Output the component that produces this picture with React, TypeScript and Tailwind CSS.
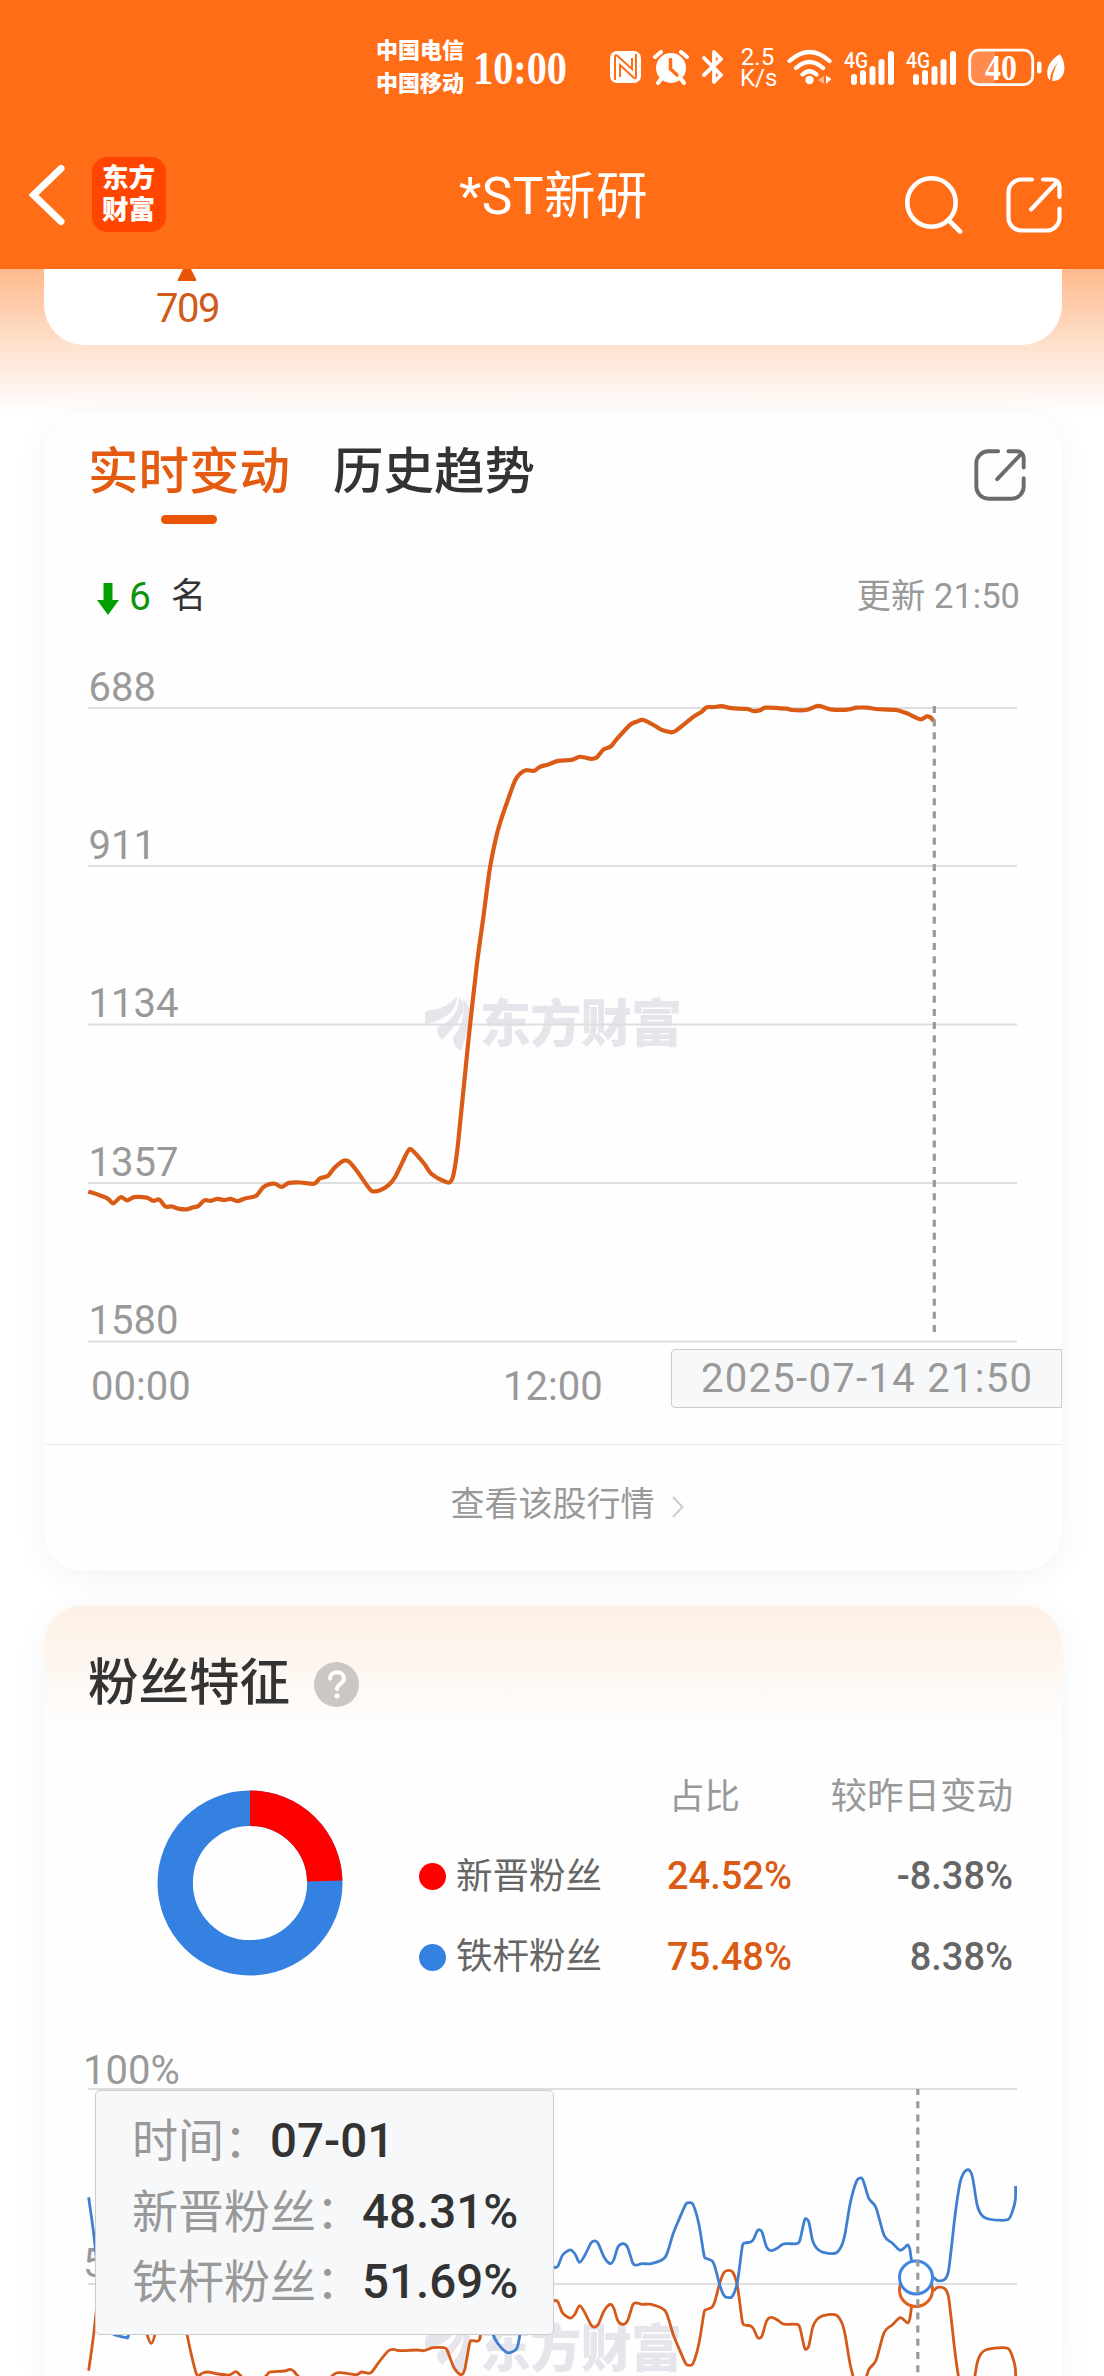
type Point = [number, number];

const RANK_TICKS = [
  { label: "688", y: 708 },
  { label: "911", y: 866 },
  { label: "1134", y: 1024.5 },
  { label: "1357", y: 1183 },
  { label: "1580", y: 1341.5 },
];

const RANK_POINTS: Point[] = [
  [88.3, 1191.4], [106.7, 1198], [113.3, 1203.3], [120.7, 1197.2], [127.3, 1200.4], [134, 1197.2],
  [146.7, 1197.6], [153.3, 1200.8], [159.3, 1199.6], [165.3, 1206.5], [171.7, 1206.5], [178.3, 1208.6],
  [186.7, 1209.4], [192.3, 1207.4], [198.3, 1206.1], [204.3, 1200.4], [210.7, 1200.8], [217.3, 1198.8],
  [224, 1200], [230.7, 1198.8], [237.3, 1201.2], [245, 1198.4], [255.7, 1196], [262.7, 1187.8],
  [268.3, 1184.5], [275, 1183.7], [281.7, 1187], [289, 1182.9], [300.7, 1182.5], [314, 1183.7],
  [320, 1178.4], [327.7, 1176], [334, 1168.2], [341.7, 1161.7], [345.7, 1160.4], [350, 1162.5],
  [357.3, 1171.5], [370, 1189.4], [374, 1191.4], [380, 1190.2], [388.3, 1185.3], [395, 1177.2],
  [405, 1156.8], [408.3, 1150.6], [411.7, 1149.8], [423.3, 1162.5], [430, 1172.3], [435, 1176.4],
  [443.3, 1180.8], [449.3, 1182.5], [453.3, 1175.5], [458, 1144], [468.3, 1041.6], [476.7, 965.9],
  [483.3, 917.6], [490, 867.7], [496.7, 835], [501.7, 817.8], [508.3, 798.8], [515, 780.6],
  [520, 773.7], [526, 770.2], [534, 770.9], [540, 766.8], [548.3, 764.4], [558.3, 760.9],
  [571.7, 759.9], [579.3, 756.8], [585, 757.5], [591, 758.9], [596.7, 757.5], [603.3, 749.6],
  [610.7, 746.5], [616.7, 739.2], [630, 724.8], [636.7, 721.7], [643.3, 720], [655, 725.8],
  [661.7, 729.9], [668.3, 731.7], [675, 731.3], [693.3, 716.9], [701.7, 711.7], [706.7, 707.2],
  [713.3, 707.2], [721.7, 706.2], [731.7, 708.2], [746.7, 708.9], [753.3, 711], [760, 710.3],
  [766, 707.6], [786.4, 708.7], [791.8, 710], [806.2, 710], [817, 706], [822.4, 706.7],
  [830.6, 709.3], [847.5, 709.7], [856.5, 707.7], [867.3, 707.7], [876.3, 709], [896.1, 710],
  [906.9, 713.3], [920.5, 719.3], [926.7, 716.3], [930.3, 717.3], [933.5, 720.7],
];

const LOYAL_POINTS: Point[] = [
  [88.6, 2197.3], [93.6, 2233], [100, 2290], [106, 2325], [113, 2334], [119, 2336],
  [125.7, 2337.3], [129, 2333], [136, 2280], [147, 2234], [151.4, 2224.7], [155, 2234],
  [162, 2270], [170, 2300], [180, 2270], [187, 2234], [191.8, 2211.3], [197, 2193],
  [202.5, 2195], [208, 2196], [218.6, 2194], [229, 2193], [235.7, 2196.3], [240, 2193],
  [253, 2180], [266.8, 2193], [270, 2196], [284.6, 2197], [290, 2198.7], [293.6, 2197],
  [297, 2193], [315, 2175], [333, 2193], [340, 2195.3], [356, 2193.3], [361.4, 2196],
  [368.6, 2194.7], [372, 2196.3], [379.3, 2206.3], [388.2, 2217], [393.6, 2218.7], [399, 2217.3],
  [416.8, 2218], [424, 2217.3], [432.9, 2220.3], [443.6, 2220.3], [447, 2218], [454.3, 2199.7],
  [461.4, 2193.3], [465, 2199.7], [469.6, 2224.7], [472, 2227.3], [478.6, 2227.3], [481, 2238],
  [486, 2300], [493, 2334], [499, 2345], [506, 2352], [511.4, 2352.3], [517, 2348],
  [520, 2334], [526, 2290], [535, 2250], [545, 2262], [554.4, 2267.3], [558, 2266],
  [562.7, 2255], [570.2, 2249.8], [575, 2254], [579.6, 2262.4], [585, 2255], [591, 2243],
  [594.7, 2240.9], [598.3, 2243.7], [604, 2257], [610.1, 2263.6], [613.7, 2260], [618, 2247],
  [623.5, 2243.7], [627.8, 2247.8], [632.8, 2263.2], [636.4, 2265.2], [642.2, 2263.6], [651.5, 2263.6],
  [665.2, 2257.1], [673, 2234], [678.5, 2220.6], [685.7, 2204.4], [689.3, 2202.8], [693.2, 2204.8],
  [699, 2224.7], [704, 2255], [706.2, 2258.3], [712, 2260.8], [714.8, 2266.5], [719.9, 2285.5],
  [724.2, 2295.7], [728.5, 2297.7], [732.8, 2295.7], [737.5, 2281.5], [742.2, 2247], [745, 2243],
  [750.8, 2242.1], [753.7, 2238.9], [757.3, 2230.8], [760.1, 2230], [762.3, 2232.8], [766.6, 2247],
  [770.9, 2250.6], [776.7, 2248.6], [782.8, 2244.2], [788.2, 2243.7], [796.1, 2243.7], [799.7, 2240.9],
  [804.4, 2220.6], [806.5, 2219], [809, 2222.7], [812.7, 2240.9], [817, 2248.6], [823.4, 2252.3],
  [835.7, 2253.1], [841.4, 2246.2], [845, 2234], [850.4, 2202.4], [856.5, 2181.3], [860.1, 2178],
  [863, 2180], [868.8, 2198.3], [876, 2207.7], [884.2, 2235.6], [892.5, 2243.3], [899.7, 2250.2],
  [904, 2248.2], [907.6, 2245], [909.8, 2249], [912, 2263], [917, 2277.5], [932.8, 2277.4],
  [937.5, 2280.7], [944.7, 2279.4], [948.3, 2272.1], [950.8, 2253], [955.4, 2212.5], [959.8, 2184],
  [962.6, 2174.8], [966.2, 2170.3], [969.8, 2170.7], [972.7, 2178], [977, 2204.4], [980.6, 2213.7],
  [986, 2218.2], [998.6, 2220.2], [1008.3, 2219.4], [1012.3, 2211.7], [1015.3, 2200], [1015.6, 2186],
];

// the two groups always add up to 100%, so one series mirrors the other around the 50% line
const NEW_POINTS: Point[] = LOYAL_POINTS.map(([x, y]) => [x, 4568 - y]);

const FANS = [
  { name: "新晋粉丝", dot: "bg-[#ff0000]", share: "24.52%", change: "-8.38%" },
  { name: "铁杆粉丝", dot: "bg-[#3581e1]", share: "75.48%", change: "8.38%" },
];

const TOOLTIP_ROWS = [
  { label: "时间：", value: "07-01" },
  { label: "新晋粉丝：", value: "48.31%" },
  { label: "铁杆粉丝：", value: "51.69%" },
];

function smoothPath(points: Point[]) {
  let d = `M${points[0][0]} ${points[0][1]}`;
  for (let i = 0; i < points.length - 1; i++) {
    const p0 = points[i - 1] ?? points[i];
    const p1 = points[i];
    const p2 = points[i + 1];
    const p3 = points[i + 2] ?? p2;
    d += `C${p1[0] + (p2[0] - p0[0]) / 7} ${p1[1] + (p2[1] - p0[1]) / 7} ${p2[0] - (p3[0] - p1[0]) / 7} ${p2[1] - (p3[1] - p1[1]) / 7} ${p2[0]} ${p2[1]}`;
  }
  return d;
}

function SignalIcon() {
  return (
    <svg className="w-[52px] h-[36px] overflow-visible" viewBox="0 0 52 36" fill="#fff">
      <text x="0" y="18" fontSize="22" fontWeight="500" textLength="24" lengthAdjust="spacingAndGlyphs">
        4G
      </text>
      <rect x="7" y="24" width="6" height="11" rx="3" />
      <rect x="16" y="20" width="6" height="15" rx="3" />
      <rect x="25.5" y="16" width="6" height="19" rx="3" />
      <rect x="34.5" y="9" width="6" height="26" rx="3" />
      <rect x="44" y="1" width="6" height="34" rx="3" />
    </svg>
  );
}

function StatusBar() {
  return (
    <div className="flex h-[130px] pt-[37px] pl-[376px] text-white">
      <div className="-mt-[3px] w-[99px] text-[22px] leading-[33px] font-black whitespace-nowrap">
        <div>中国电信</div>
        <div>中国移动</div>
      </div>
      <svg className="mt-[7px] w-[135px] h-[50px]" viewBox="0 0 135 50" fill="#fff">
        <text
          x="-2"
          y="40"
          fontSize="46"
          fontWeight="700"
          textLength="94"
          lengthAdjust="spacingAndGlyphs"
          className="font-['Liberation_Serif']"
        >
          10:00
        </text>
      </svg>
      <svg className="mt-[13px] w-[31px] h-[34px]" viewBox="0 0 31 34">
        <rect x="0" y="1" width="31" height="32" rx="7" fill="#fff" />
        <path
          d="M5 30V7q0-3 2.500-1L22 19V8M26 4v22.500q0 3-2.500 1L10 15v12"
          fill="none"
          stroke="#ff6d17"
          strokeWidth="2"
        />
      </svg>
      <svg className="mt-[13px] ml-[12px] w-[36px] h-[35px]" viewBox="0 0 36 35" fill="none" stroke="#fff" strokeLinecap="round">
        <circle cx="18" cy="18" r="15" fill="#fff" stroke="none" />
        <path d="M2 7l6-5M34 7l-6-5M8 29l-3 4M28 29l3 4" strokeWidth="4" />
        <path d="M17.500 9.500V19l6.500 6" stroke="#ff6d17" strokeWidth="3.500" />
      </svg>
      <svg
        className="mt-[12px] ml-[13px] w-[22px] h-[36px]"
        viewBox="0 0 22 36"
        fill="none"
        stroke="#fff"
        strokeWidth="3.800"
        strokeLinecap="round"
        strokeLinejoin="round"
      >
        <path d="M2 9l17 17-7 7V3l7 7L2 26" />
      </svg>
      <div className="mt-[10px] ml-[16px] w-[35px] text-center text-[24px] leading-[21px]">
        <div>2.5</div>
        <div>K/s</div>
      </div>
      <svg className="mt-[12px] ml-[12px] w-[45px] h-[36px]" viewBox="0 0 45 36" fill="none" stroke="#fff" strokeLinecap="round">
        <path d="M2.500 12q20-18 40 0M9 19q13.500-12 27 0M15.500 25.500q7-6.500 14 0" strokeWidth="4.200" />
        <circle cx="22.500" cy="31" r="4.200" fill="#fff" stroke="none" />
        <path d="M37 27v8l-6-4z" fill="#ffb48a" stroke="none" />
        <path d="M39 26.500v8.500l5.500-5z" fill="#fff" stroke="none" />
      </svg>
      <div className="mt-[13px] ml-[12px] flex gap-[10px]">
        <SignalIcon />
        <SignalIcon />
      </div>
      <svg className="mt-[11px] ml-[10px] w-[100px] h-[40px]" viewBox="0 0 100 40" fill="none">
        <path d="M10 2.500H27V36.500H10a7.500 7.500 0 0 1-7.500-7.500V10A7.500 7.500 0 0 1 10 2.500z" fill="#ff8b4d" />
        <rect x="1.700" y="2.200" width="63" height="34.500" rx="9" stroke="#fff" strokeWidth="2.800" />
        <rect x="69" y="13.500" width="4.500" height="12" rx="2.200" fill="#fff" />
        <text
          x="33"
          y="32"
          fill="#fff"
          fontSize="36"
          fontWeight="700"
          textAnchor="middle"
          textLength="32"
          lengthAdjust="spacingAndGlyphs"
          className="font-['Liberation_Serif']"
        >
          40
        </text>
        <path d="M92 6C83 11 77 20 80 30l2 2.500Q82 24 90 14q-5 9-6 19c13 1 16-15 8-27z" fill="#fff" />
      </svg>
    </div>
  );
}

function ShareIcon({ className }: { className: string }) {
  return (
    <svg className={className} viewBox="0 0 56 56" fill="none" stroke="currentColor" strokeWidth="4.200" strokeLinecap="round">
      <path d="M26 2.500H15.500A13 13 0 0 0 2.500 15.500v25a13 13 0 0 0 13 13h25a13 13 0 0 0 13-13V31.500" />
      <path d="M37 2.500h9.500a7 7 0 0 1 7 7V20M51.500 4.500L25 32.500" />
    </svg>
  );
}

function NavBar() {
  return (
    <div className="flex h-[138px] text-white">
      <svg className="ml-[29px] mt-[34px] w-[36px] h-[62px]" viewBox="0 0 36 62" fill="none" stroke="#fff" strokeWidth="7" strokeLinecap="round">
        <path d="M32 4.500L4.500 31 32 57.500" />
      </svg>
      <div className="ml-[27px] mt-[27px] flex h-[75px] w-[74px] flex-col justify-center rounded-[15px] bg-[#ff4500] pr-[1px] pb-[2px] text-center text-[26.500px] leading-[32px] font-black">
        <div>东方</div>
        <div>财富</div>
      </div>
      <h1 className="ml-[293px] mt-[32px] w-[446px] text-[51.500px] leading-[70px] tracking-[0.5px]">*ST新研</h1>
      <svg className="mt-[46px] w-[58px] h-[58px]" viewBox="0 0 58 58" fill="none" stroke="#fff" strokeWidth="4.600" strokeLinecap="round">
        <circle cx="26.500" cy="26.500" r="24.200" />
        <path d="M44 44.500l11 11" />
      </svg>
      <ShareIcon className="mt-[47px] ml-[43px] w-[56px] h-[56px]" />
    </div>
  );
}

function Watermark({ x, y }: { x: number; y: number }) {
  return (
    <g transform={`translate(${x} ${y})`} fill="#e6e5eb">
      <path d="M0 20Q0 14 5 14 22 13 32 0 32 16 14 24 7 27 0 29z" />
      <path d="M34 1Q42 10 36 20 32 28 17 44 10 36 13 31 34 22 34 1z" />
      <path d="M38 3Q48 10 44 30L36 55Q26 48 29 40 41 26 38 3z" />
      <text x="55" y="46" fontSize="51" fontWeight="900" textLength="202">
        东方财富
      </text>
    </g>
  );
}

function RankChart() {
  return (
    <svg className="block h-[794px] w-[1018px]" viewBox="44 650 1018 794">
      <Watermark x={425} y={996} />
      {RANK_TICKS.map((tick) => (
        <g key={tick.label}>
          <line x1="88" x2="1017" y1={tick.y} y2={tick.y} stroke="#dedede" strokeWidth="1.800" />
          <text x="88.500" y={tick.y - 7.5} fontSize="40" fill="#999">
            {tick.label}
          </text>
        </g>
      ))}
      <path d={smoothPath(RANK_POINTS)} fill="none" stroke="#da5b15" strokeWidth="4.200" strokeLinejoin="round" />
      <line x1="934.300" x2="934.300" y1="706" y2="1335" stroke="#999" strokeWidth="3.200" strokeDasharray="7 6.170" />
      <text x="91" y="1400" fontSize="40" fill="#999">
        00:00
      </text>
      <text x="503" y="1400" fontSize="40" fill="#999">
        12:00
      </text>
    </svg>
  );
}

function RankCard() {
  return (
    <section className="relative mx-[44px] h-[1158px] w-[1018px] rounded-[40px] bg-[#fefefe] shadow-[0_6px_32px_rgba(0,0,0,0.05)]">
      <div className="flex h-[131px] items-start pr-[36px] pl-[44px] text-[50.500px] leading-[72px] text-[#333]">
        <div className="mt-[23px] flex flex-col items-center font-medium text-[#e35a10]">
          实时变动
          <div className="mt-[7px] h-[9px] w-[56px] rounded-full bg-[#e85505]" />
        </div>
        <div className="mt-[23px] ml-[43px] font-medium">历史趋势</div>
        <ShareIcon className="mt-[36px] ml-auto h-[52px] w-[52px] text-[#6b6b6b]" />
      </div>
      <div className="flex h-[106px] items-center pr-[42px] pl-[53px] text-[35px] text-[#333]">
        <svg className="mt-1 w-[22px] h-[32px]" viewBox="0 0 22 32" fill="#00a000">
          <path d="M6.500 0h9v17H22L11 32 0 17h6.500z" />
        </svg>
        <span className="ml-[10px] text-[39px] text-[#109410]">6</span>
        <span className="ml-[20px]">名</span>
        <span className="ml-auto text-[34.500px] text-[#999]">更新 21:50</span>
      </div>
      <RankChart />
      <div className="flex h-[127px] items-center justify-center border-t-[1.500px] border-[#ebebeb] pb-[7px] text-[34px] text-[#999]">
        <span className="ml-[28px]">查看该股行情</span>
        <svg className="mt-1 ml-[17px] w-[12px] h-[22px]" viewBox="0 0 12 22" fill="none" stroke="#ccc" strokeWidth="2">
          <path d="M1 1l9.500 10L1 21" />
        </svg>
      </div>
      <div className="absolute top-[936px] right-0 h-[59px] w-[391px] rounded-l-[4px] border-[1.500px] border-[#ccc] bg-[#f7f8fa] pl-[29px] text-[40px] leading-[57px] tracking-[1.300px] whitespace-nowrap text-[#999]">
        2025-07-14 21:50
      </div>
    </section>
  );
}

function FanDonut() {
  // stroke length of the full ring
  const length = 2 * Math.PI * 74.8;
  return (
    <svg className="mt-[55px] ml-[113px] h-[186px] w-[186px]" viewBox="-93 -93 186 186" fill="none" strokeWidth="35.400">
      <circle r="74.800" stroke="#3581e1" />
      <circle r="74.800" stroke="#ff0000" strokeDasharray={`${length * 0.2452} ${length}`} transform="rotate(-90)" />
    </svg>
  );
}

function FanTrendChart() {
  return (
    <svg className="block h-[346px] w-[1018px]" viewBox="44 2030 1018 346">
      <Watermark x={425} y={2321} />
      <g stroke="#dedede" strokeWidth="1.800">
        <line x1="88" x2="1017" y1="2089" y2="2089" />
        <line x1="88" x2="1017" y1="2284" y2="2284" />
      </g>
      <g fontSize="40" fill="#999">
        <text x="83" y="2083.500">
          100%
        </text>
        <text x="83" y="2277">
          50%
        </text>
      </g>
      <g fill="none" strokeWidth="2.800" strokeLinejoin="round">
        <path d={smoothPath(NEW_POINTS)} stroke="#d4591a" />
        <path d={smoothPath(LOYAL_POINTS)} stroke="#3f7fd0" />
      </g>
      <g fill="#fff" strokeWidth="3">
        <circle cx="916" cy="2290" r="16.500" stroke="#e0601c" />
        <circle cx="916" cy="2277.500" r="16.500" stroke="#3f86e0" />
      </g>
      <line x1="917.800" x2="917.800" y1="2089" y2="2376" stroke="#999" strokeWidth="3.200" strokeDasharray="7 6.200" strokeDashoffset="1" />
    </svg>
  );
}

function FanCard() {
  return (
    <section className="relative mx-[44px] mt-[34px] h-[771px] w-[1018px] rounded-t-[40px] bg-[#fefefe] shadow-[0_6px_32px_rgba(0,0,0,0.05)]">
      <div className="flex h-[130px] items-start rounded-t-[40px] bg-linear-to-b from-[#fdf0e5] to-[#fefefe] pt-[39px] pl-[44px]">
        <h2 className="mt-[3px] text-[50.500px] leading-[72px] font-medium text-[#333]">粉丝特征</h2>
        <div className="mt-[18px] ml-[24px] flex h-[45px] w-[45px] items-center justify-center rounded-full bg-[#cac7c4]">
          <svg className="h-[30px] w-[20px]" viewBox="0 0 20 30" fill="none" stroke="#fff" strokeWidth="4" strokeLinecap="round">
            <path d="M3 8.500C3 0 17 0 17 8.500c0 5-7 5.500-7 10.500" />
            <circle cx="10" cy="26" r="2.500" fill="#fff" stroke="none" />
          </svg>
        </div>
      </div>
      <div className="flex h-[295px]">
        <FanDonut />
        <div className="ml-[76px] grid auto-rows-[80.500px] grid-cols-[248px_130px_216px] items-center pt-[21px] text-[36.500px] text-[#666]">
          <span />
          <span className="pt-[3px] pl-[2px] text-[35.500px] text-[#999]">占比</span>
          <span className="pt-[3px] text-right text-[#999]">较昨日变动</span>
          {FANS.map((fan) => (
            <div key={fan.name} className="contents">
              <span className="flex items-center gap-[10px]">
                <i className={`h-[27px] w-[27px] rounded-full ${fan.dot}`} />
                <span className="pt-[1px]">{fan.name}</span>
              </span>
              <span className="text-[38px] font-medium text-[#d95b14]">{fan.share}</span>
              <span className="text-right text-[38px] font-medium">{fan.change}</span>
            </div>
          ))}
        </div>
      </div>
      <FanTrendChart />
      <div className="absolute top-[485px] left-[51px] h-[245px] w-[459px] rounded-[5px] border-[1.500px] border-[#ccc] bg-[#f7f8fa] pt-[15px] pl-[36px] text-[46px] leading-[69.700px] whitespace-nowrap">
        {TOOLTIP_ROWS.map((row) => (
          <div key={row.label} className="flex">
            <span className="pt-[1px] text-[#999]">{row.label}</span>
            <span className="text-[47.500px] leading-[70px] font-medium text-[#333]">{row.value}</span>
          </div>
        ))}
      </div>
    </section>
  );
}

export default function App() {
  return (
    <div className="h-[2376px] w-[1104px] overflow-hidden bg-white font-[Roboto,'Noto_Sans_CJK_SC',sans-serif]">
      <header className="h-[268.500px] bg-[#ff6d17]">
        <StatusBar />
        <NavBar />
      </header>
      <div className="h-[144.500px] bg-linear-to-b from-[#feb98b] via-[#fee0cd] via-52% to-white px-[44px]">
        <div className="flex h-[76.500px] w-[1018px] flex-col rounded-b-[40px] bg-white pl-[112px] text-[#cf5a1a]">
          <svg className="ml-[21px] h-[13px] w-[20px]" viewBox="0 0 20 13" fill="#e85505">
            <path d="M6 0h8l5 10q1 2-1 2H2q-2 0-1-2z" />
          </svg>
          <span className="text-[40px] leading-[54px] tracking-[-1.500px]">709</span>
        </div>
      </div>
      <RankCard />
      <FanCard />
    </div>
  );
}
